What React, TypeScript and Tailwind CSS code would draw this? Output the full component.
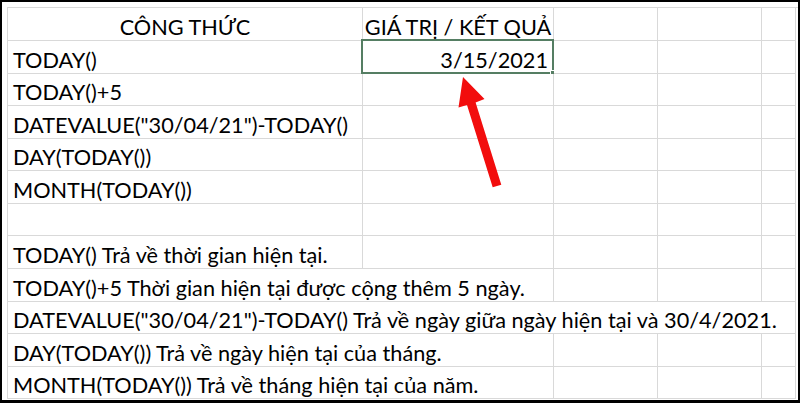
import React from 'react';

type Row = {
  h: string;
  cells: { text?: string; span?: string; align?: string; selected?: boolean }[];
};

// column widths: A 355, B 191, C 104, D 104, E 34 (right border included)
const cols = 'grid-cols-[355px_191px_104px_104px_34px]';

const empty = (n: number) => Array.from({ length: n }, () => ({}));

const rows: Row[] = [
  {
    h: 'h-[33px]',
    cells: [
      { text: 'CÔNG THỨC', align: 'justify-center' },
      { text: 'GIÁ TRỊ / KẾT QUẢ', align: 'justify-center' },
      ...empty(3),
    ],
  },
  {
    h: 'h-[33px]',
    cells: [{ text: 'TODAY()' }, { text: '3/15/2021', align: 'justify-end', selected: true }, ...empty(3)],
  },
  { h: 'h-[32px]', cells: [{ text: 'TODAY()+5' }, ...empty(4)] },
  { h: 'h-[33px]', cells: [{ text: 'DATEVALUE("30/04/21")-TODAY()' }, ...empty(4)] },
  { h: 'h-[32px]', cells: [{ text: 'DAY(TODAY())' }, ...empty(4)] },
  { h: 'h-[33px]', cells: [{ text: 'MONTH(TODAY())' }, ...empty(4)] },
  { h: 'h-[32px]', cells: empty(5) },
  { h: 'h-[33px]', cells: [{ text: 'TODAY() Trả về thời gian hiện tại.' }, ...empty(4)] },
  {
    h: 'h-[33px]',
    cells: [{ text: 'TODAY()+5 Thời gian hiện tại được cộng thêm 5 ngày.', span: 'col-span-2' }, ...empty(3)],
  },
  {
    h: 'h-[32px]',
    cells: [
      {
        text: 'DATEVALUE("30/04/21")-TODAY() Trả về ngày giữa ngày hiện tại và 30/4/2021.',
        span: 'col-span-5',
      },
    ],
  },
  {
    h: 'h-[33px]',
    cells: [{ text: 'DAY(TODAY()) Trả về ngày hiện tại của tháng.', span: 'col-span-2' }, ...empty(3)],
  },
  {
    h: 'h-[32px]',
    cells: [{ text: 'MONTH(TODAY()) Trả về tháng hiện tại của năm.', span: 'col-span-2' }, ...empty(3)],
  },
];

export default function App() {
  return (
    <div className="relative h-[403px] w-[800px] overflow-hidden border-t-2 border-r-2 border-b-[3px] border-l-2 border-black bg-white pt-[5px] pl-[5px] font-['Lato',sans-serif] text-[21.7px] text-black">
      <div className="border-t border-l border-[#d9d9d9]">
        {rows.map((row, i) => (
          <div key={i} className={`grid ${cols} ${row.h}`}>
            {row.cells.map((c, j) => (
              <div
                key={j}
                className={`relative flex items-end whitespace-nowrap border-r border-b border-[#d9d9d9] px-[5px] leading-[26px] ${c.span ?? ''} ${c.align ?? ''}`}
              >
                {c.text && <span>{c.text}</span>}
                {c.selected && (
                  <div className="absolute -top-[2px] -left-[2px] -right-[1px] -bottom-[1px] border-2 border-[#557e63]">
                    <div className="absolute -right-[3px] -bottom-[3px] h-[5px] w-[5px] border border-white bg-[#557e63]" />
                  </div>
                )}
              </div>
            ))}
          </div>
        ))}
      </div>

      {/* red pointer arrow */}
      <svg className="absolute top-0 left-0 h-[403px] w-[800px]" viewBox="0 0 800 403">
        <polygon
          points="463,77 484.5,99 475.6,102.4 501.3,184.7 492.7,187.3 467,105 458.5,107.5"
          fill="#f20d0d"
          transform="translate(-2,-2)"
        />
      </svg>
    </div>
  );
}
